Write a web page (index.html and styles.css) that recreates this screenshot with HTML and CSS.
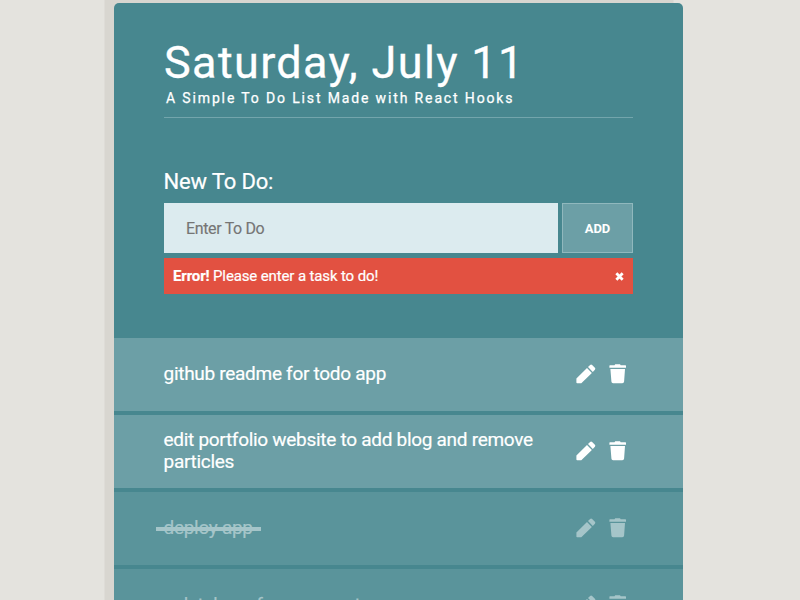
FILE: index.html
```html
<!DOCTYPE html>
<html lang="en">
<head>
<meta charset="utf-8">
<title>To Do List</title>
<link rel="stylesheet" href="styles.css">
</head>
<body>
<svg class="defs" aria-hidden="true">
  <symbol id="pencil" viewBox="0 0 20 20"><path d="M0.4 14.6 L11 4 L15.9 8.9 L5.3 19.3 H1.2 Q0.4 19.3 0.4 18.5Z M12 3 L14.1 0.9 Q15.1 0 16.1 0.9 L18.9 3.7 Q19.8 4.7 18.9 5.7 L16.8 7.9Z"/></symbol>
  <symbol id="trash" viewBox="0 0 18 20"><path d="M5.5 1.2 L6.2 0.2 H11 L11.7 1.2 H16.4 Q17 1.2 17 1.8 V3.8 H0.4 V1.8 Q0.4 1.2 1 1.2Z M1.4 5.1 H16 L15.1 17.6 Q15 19.3 13.3 19.3 H4.1 Q2.5 19.3 2.4 17.6Z"/></symbol>
</svg>
<main class="card">
  <header class="header">
    <h1>Saturday, July 11</h1>
    <p>A Simple To Do List Made with React Hooks</p>
  </header>
  <form class="form">
    <label for="task">New To Do:</label>
    <div class="fields">
      <input id="task" type="text" placeholder="Enter To Do">
      <button type="button">ADD</button>
    </div>
    <div class="alert"><span><b>Error!</b> Please enter a task to do!</span>
      <svg class="close" viewBox="0 0 8 8"><path d="M1.2 1.2 6.8 6.8M6.8 1.2 1.2 6.8"/></svg>
    </div>
  </form>
  <ul class="list">
    <li><span class="task">github readme for todo app</span><svg class="pencil"><use href="#pencil"/></svg><svg class="trash"><use href="#trash"/></svg></li>
    <li><span class="task">edit portfolio website to add blog and remove particles</span><svg class="pencil"><use href="#pencil"/></svg><svg class="trash"><use href="#trash"/></svg></li>
    <li class="done"><span class="task"><span class="strike">deploy app</span></span><svg class="pencil"><use href="#pencil"/></svg><svg class="trash"><use href="#trash"/></svg></li>
    <li class="done last"><span class="task">a database for comments</span><svg class="pencil"><use href="#pencil"/></svg><svg class="trash"><use href="#trash"/></svg></li>
  </ul>
</main>
</body>
</html>
```

FILE: styles.css
```css
* { box-sizing: border-box; }
html { overflow: hidden; }
body {
  margin: 0;
  height: 600px;
  overflow: hidden;
  padding: 3px 117px 0 113.5px;
  background: #e4e3de;
  font-family: Roboto, sans-serif;
  color: #fff;
}
.defs { position: absolute; width: 0; height: 0; }
.card {
  height: 642px;
  background: #47878f;
  border-radius: 5px;
  box-shadow: -9.5px -9.5px 0 #d8d6d0;
}
.header {
  margin: 0 50.5px;
  height: 115px;
  padding-top: 33px;
  border-bottom: 1px solid #73a5ac;
}
h1 {
  margin: 0;
  font-size: 45px;
  line-height: 53px;
  font-weight: 400;
  letter-spacing: 1.35px;
  white-space: nowrap;
  -webkit-text-stroke: 0.3px #fff;
}
.header p {
  margin: 0 0 0 2px;
  font-size: 14px;
  line-height: 18px;
  letter-spacing: 1.86px;
  white-space: nowrap;
  -webkit-text-stroke: 0.25px #fff;
}
.form { height: 219.5px; padding: 50px 50px 0; }
.form label {
  display: block;
  font-size: 22px;
  line-height: 28px;
  letter-spacing: -0.15px;
  -webkit-text-stroke: 0.2px #fff;
}
.fields { display: flex; gap: 4px; margin-top: 7px; height: 50px; }
.fields input {
  flex: 1;
  min-width: 0;
  border: 0;
  padding: 0 22.5px;
  background: #dcebef;
  font: 16px Roboto, sans-serif;
  letter-spacing: -0.35px;
}
.fields input::placeholder { color: #757575; -webkit-text-stroke: 0.15px #757575; }
.fields button {
  width: 71px;
  border: 1px solid #90b8bd;
  background: #6c9fa6;
  color: #fff;
  font: 700 13px Roboto, sans-serif;
}
.alert {
  display: flex;
  justify-content: space-between;
  align-items: center;
  height: 36px;
  margin-top: 5px;
  padding: 0 9.5px;
  background: #e25141;
  font-size: 15px;
  letter-spacing: -0.13px;
  -webkit-text-stroke: 0.2px #fff;
}
.close { width: 9px; height: 9px; stroke: #fff; stroke-width: 2.5; }
.list { margin: 0; padding: 0; list-style: none; }
.list li {
  display: flex;
  align-items: center;
  height: 73px;
  margin-bottom: 4px;
  padding: 0 56px 0 50px;
  background: #6c9fa6;
}
.task {
  width: 390px;
  margin-right: 22px;
  font-size: 19px;
  line-height: 22px;
  letter-spacing: -0.29px;
  -webkit-text-stroke: 0.2px currentColor;
}
.pencil, .trash { flex: none; fill: currentColor; height: 20px; }
.pencil { width: 20px; margin-right: 13px; }
.trash { width: 18px; }
.list .done { background: #5a949b; color: #a5c5c9; }
.last .task { letter-spacing: -0.5px; }
.strike { position: relative; }
.strike::after {
  content: "";
  position: absolute;
  left: -8px;
  right: -8px;
  top: 11px;
  height: 4px;
  background: #a5c5c9;
}
```
